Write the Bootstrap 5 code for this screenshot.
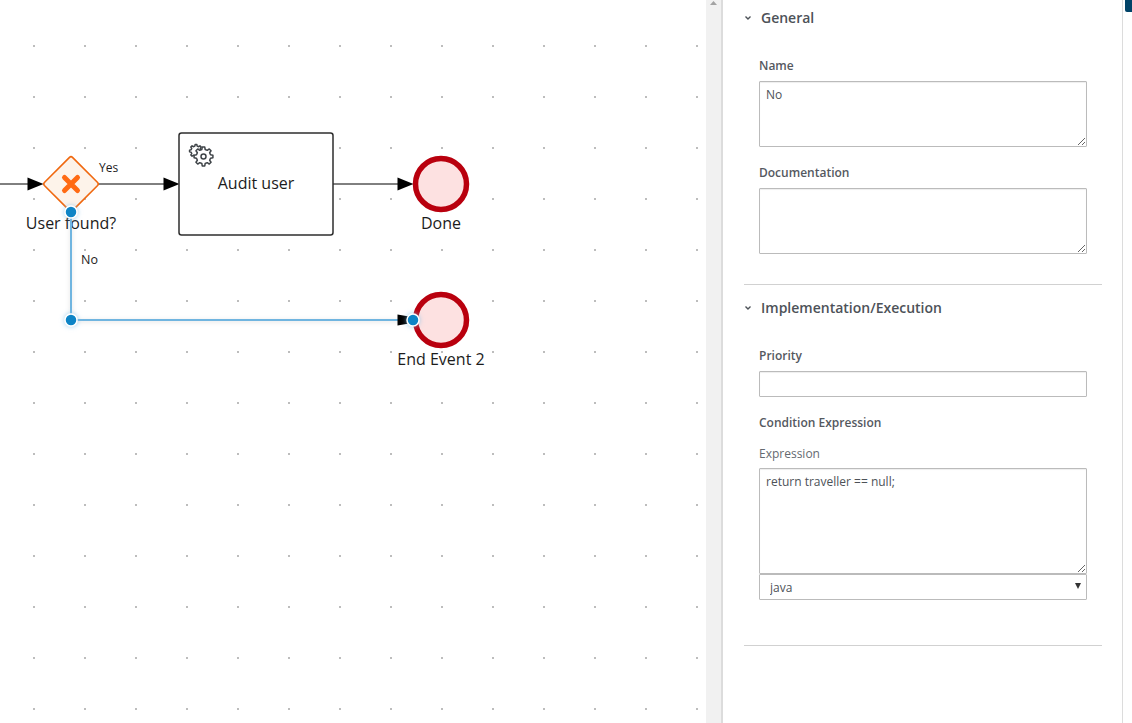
<!DOCTYPE html>
<html lang="en">
<head>
  <meta charset="UTF-8">
  <title>Process designer</title>
  <link href="https://cdn.jsdelivr.net/npm/bootstrap@5.3.3/dist/css/bootstrap.min.css" rel="stylesheet">
  <style>
    html, body { height: 723px; overflow: hidden; }
    body { font-family: "Open Sans", "Noto Sans", sans-serif; font-size: 12px; color: #4d5258; background: #fff; }
    .canvas-area { width: 706px; height: 723px; flex: none; }
    .canvas-area svg { display: block; }
    .canvas-area text { font-family: "Open Sans", "Noto Sans", sans-serif; fill: #1c1c1c; }
    .fake-scroll { width: 15px; flex: none; background: #f1f1f1; }
    .fake-scroll svg { display: block; }
    .props-panel { width: 402px; flex: none; border-left: 2px solid #dcdcdc; border-right: 1px solid #dcdcdc; padding: 8px 20px 0 21px; }
    .props-section { border-bottom: 1px solid #d1d1d1; }
    .sec-one { padding-bottom: 30px; margin-bottom: 13px; }
    .sec-two { padding-bottom: 45px; }
    .sec-title { font-size: 14px; line-height: 20px; font-weight: 600; color: #4d5258; margin: 0 0 30px; gap: 10px; padding-left: 1px; }
    .field-block { padding: 0 15px; }
    .field-label { display: block; font-size: 12px; line-height: 16px; font-weight: 600; color: #55595f; margin-bottom: 7px; }
    .field-gap { margin-top: 18px; }
    .cond-label { margin-bottom: 15px; }
    .sub-label { font-weight: 400; color: #656a70; margin-bottom: 6px; }
    .field-input { font-size: 12px; line-height: 16px; color: #4d5258; border: 1px solid #bbb; border-radius: 1px; padding: 5px 6px; box-shadow: inset 0 1px 1px rgba(3,3,3,.07); }
    textarea.tall-66 { height: 66px; min-height: 0; }
    textarea.tall-106 { height: 106px; min-height: 0; }
    .field-input.one-line { height: 26px; min-height: 0; }
    .lang-select { height: 26px; min-height: 0; font-size: 12px; line-height: 16px; color: #4d5258; border: 1px solid #bbb; border-radius: 1px; padding: 5px 20px 3px 10px; background-size: 6px 6px; background-position: right 5px top 8px;
      background-image: url("data:image/svg+xml,%3csvg xmlns='http://www.w3.org/2000/svg' viewBox='0 0 6 6'%3e%3cpath fill='%23333' d='M0 0h6L3 6z'/%3e%3c/svg%3e"); }
    .side-rail { flex: 1; position: relative; }
    .rail-tab { position: absolute; top: 0; left: 2px; right: 0; height: 12px; background: #004368; border-bottom-left-radius: 2px; }
  </style>
</head>
<body class="d-flex">

<!-- diagram -->
<div class="canvas-area">
  <svg width="706" height="723" viewBox="0 0 706 723" xmlns="http://www.w3.org/2000/svg">
    <defs>
      <pattern id="dotGrid" x="33" y="45" width="51" height="51" patternUnits="userSpaceOnUse">
        <rect width="2" height="2" fill="#bdbdbd"/>
      </pattern>
      <filter id="glow" x="-60%" y="-60%" width="220%" height="220%">
        <feDropShadow dx="0" dy="0" stdDeviation="2.500" flood-color="#7fc0e8" flood-opacity=".75"/>
      </filter>
      <filter id="lineGlow" filterUnits="userSpaceOnUse" x="50" y="200" width="380" height="140">
        <feDropShadow dx="0" dy="1" stdDeviation="2" flood-color="#8a8a8a" flood-opacity=".3"/>
      </filter>
    </defs>
    <rect width="706" height="723" fill="#fff"/>
    <rect width="706" height="723" fill="url(#dotGrid)"/>

    <!-- flows -->
    <g stroke="#000" stroke-width="1" fill="none">
      <path d="M0 184H29"/>
      <path d="M99 184H165"/>
      <path d="M333 184H399"/>
    </g>
    <g fill="#000">
      <path d="M27.500 177.500L43.500 184L27.500 190.500Z"/>
      <path d="M163.500 177.500L179.500 184L163.500 190.500Z"/>
      <path d="M397.500 177.500L413.500 184L397.500 190.500Z"/>
    </g>

    <!-- gateway -->
    <path d="M69.5 157.4Q71 156 72.5 157.4L97.6 182.5Q99 184 97.6 185.5L72.5 210.6Q71 212 69.5 210.6L44.4 185.5Q43 184 44.4 182.5Z" fill="#fdf3ea" stroke="#f0680f" stroke-width="1.6"/>
    <path d="M64.5 177.5L77.5 190.5M77.5 177.5L64.5 190.5" stroke="#ff6a13" stroke-width="5" stroke-linecap="round"/>

    <!-- task -->
    <rect x="179" y="133" width="154" height="102" rx="2.5" fill="#fff" stroke="#2e2e2e" stroke-width="1.5"/>
    <path id="gearBack" fill="#fff" stroke="#3f4448" stroke-width="1.5" stroke-linejoin="round"/>
    <path id="gearFront" fill="#fff" stroke="#3f4448" stroke-width="1.5" stroke-linejoin="round"/>
    <circle cx="203.500" cy="156.500" r="2.500" fill="#fff" stroke="#3f4448" stroke-width="1.500"/>
    <text x="256" y="189" font-size="16" text-anchor="middle">Audit user</text>

    <!-- end events -->
    <circle cx="441" cy="184" r="25.500" fill="#fde1e1" stroke="#b9000e" stroke-width="5.500"/>
    <circle cx="441" cy="320" r="25.500" fill="#fde1e1" stroke="#b9000e" stroke-width="5.500"/>

    <!-- labels -->
    <text x="71" y="229" font-size="16" text-anchor="middle">User found?</text>
    <text x="441" y="229" font-size="16" text-anchor="middle">Done</text>
    <text x="441" y="365" font-size="16" text-anchor="middle">End Event 2</text>
    <text x="99" y="172" font-size="12">Yes</text>
    <text x="81" y="264" font-size="12.500">No</text>

    <!-- selected flow -->
    <path d="M71 212V320H398" fill="none" stroke="#6fb5e0" stroke-width="2" filter="url(#lineGlow)"/>
    <path d="M397.500 314.500L409 316.500V323.500L397.500 325.500Z" fill="#000"/>
    <g fill="#0b84c6" stroke="#fff" stroke-width="1.500" filter="url(#glow)">
      <circle cx="71" cy="212" r="6"/>
      <circle cx="71" cy="320" r="6"/>
      <circle cx="413" cy="320" r="6"/>
    </g>
  </svg>
</div>

<!-- scrollbar -->
<div class="fake-scroll">
  <svg width="15" height="12" viewBox="0 0 15 12" xmlns="http://www.w3.org/2000/svg"><path d="M7.500 1L11 5H4Z" fill="#a3a3a3"/></svg>
</div>

<!-- properties -->
<div class="props-panel">
  <div class="props-section sec-one">
    <div class="sec-title d-flex align-items-center">
      <svg width="6" height="4" viewBox="0 0 6 4" xmlns="http://www.w3.org/2000/svg"><path d="M.5.500L3 3L5.500.500" fill="none" stroke="#4d5258" stroke-width="1.400"/></svg>
      <span>General</span>
    </div>
    <div class="field-block">
      <label class="field-label" for="nameField">Name</label>
      <textarea id="nameField" class="form-control field-input tall-66">No</textarea>
      <label class="field-label field-gap" for="docField">Documentation</label>
      <textarea id="docField" class="form-control field-input tall-66"></textarea>
    </div>
  </div>

  <div class="props-section sec-two">
    <div class="sec-title d-flex align-items-center">
      <svg width="6" height="4" viewBox="0 0 6 4" xmlns="http://www.w3.org/2000/svg"><path d="M.5.500L3 3L5.500.500" fill="none" stroke="#4d5258" stroke-width="1.400"/></svg>
      <span>Implementation/Execution</span>
    </div>
    <div class="field-block">
      <label class="field-label" for="prioField">Priority</label>
      <input id="prioField" type="text" class="form-control field-input one-line">
      <div class="field-label field-gap cond-label">Condition Expression</div>
      <label class="field-label sub-label" for="exprField">Expression</label>
      <textarea id="exprField" class="form-control field-input tall-106">return traveller == null;</textarea>
      <select class="form-select lang-select" aria-label="Language">
        <option>java</option>
        <option>drools</option>
      </select>
    </div>
  </div>
</div>

<div class="side-rail"><div class="rail-tab"></div></div>

<script>
  // gear outline for the service task marker
  function gearPath(cx, cy, outer, inner, teeth) {
    const step = Math.PI * 2 / teeth;
    let d = "";
    for (let i = 0; i < teeth; i++) {
      const a = i * step;
      const pts = [
        [inner, a - step * 0.3], [outer, a - step * 0.17],
        [outer, a + step * 0.17], [inner, a + step * 0.3]
      ];
      pts.forEach(function (p, n) {
        const x = (cx + p[0] * Math.cos(p[1])).toFixed(2);
        const y = (cy + p[0] * Math.sin(p[1])).toFixed(2);
        d += (i === 0 && n === 0 ? "M" : "L") + x + " " + y;
      });
    }
    return d + "Z";
  }
  document.getElementById("gearBack").setAttribute("d", gearPath(196, 151, 6.5, 5, 8));
  document.getElementById("gearFront").setAttribute("d", gearPath(203.5, 156.5, 9.5, 7.2, 8));
</script>
<script src="https://cdn.jsdelivr.net/npm/bootstrap@5.3.3/dist/js/bootstrap.bundle.min.js"></script>
</body>
</html>
